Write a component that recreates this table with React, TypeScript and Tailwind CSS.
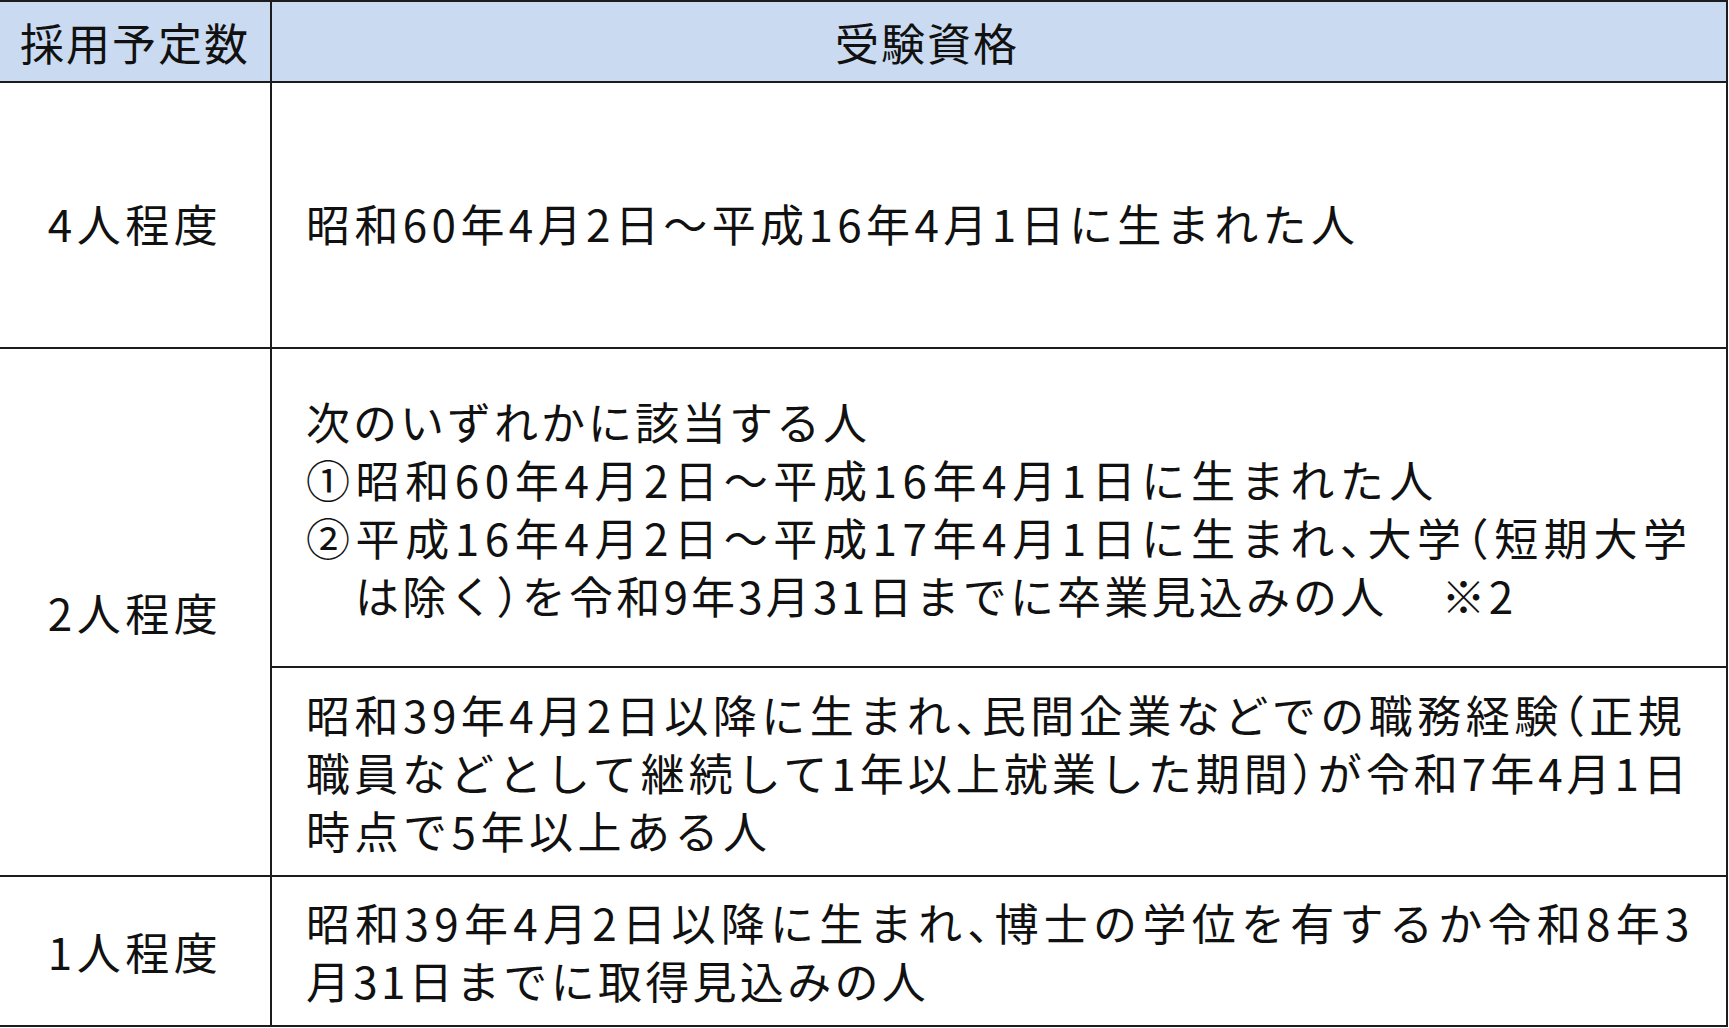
import React from "react";

const font = { fontFamily: '"Noto Sans CJK JP", "Noto Sans", sans-serif' };

function Line({
  children,
  indent = false,
  className = "",
}: {
  children: React.ReactNode;
  indent?: boolean;
  className?: string;
}) {
  return (
    <div className={`whitespace-nowrap leading-[58px] ${indent ? "pl-[49px]" : ""} ${className}`}>{children}</div>
  );
}

function P({ children }: { children: React.ReactNode }) {
  return <span className="[font-feature-settings:'halt']">{children}</span>;
}

const body = "text-[44px] tracking-[4.5px]";
const line = "border-[#1c1c1c]";

export default function App() {
  return (
    <div className="w-[1729px] h-[1028px] bg-white text-[#111111]" style={font}>
      <div className={`w-[1728px] border-t-2 border-r-2 border-b-2 ${line}`}>
        {/* header */}
        <div className={`flex h-[81px] border-b-2 ${line} bg-[#cadaf0]`}>
          <div className={`w-[272px] shrink-0 border-r-2 ${line} flex items-center justify-center text-[44px] tracking-[2px]`}>
            採用予定数
          </div>
          <div className="flex-1 flex items-center justify-center pr-[144px] text-[44px] tracking-[2px]">
            受験資格
          </div>
        </div>

        {/* row 1 */}
        <div className={`flex h-[266px] border-b-2 ${line}`}>
          <div className={`w-[272px] shrink-0 border-r-2 ${line} flex items-center justify-center pt-[15px] ${body}`}>
            4人程度
          </div>
          <div className={`flex-1 flex flex-col justify-center pt-[15px] pl-[34px] ${body}`}>
            <Line className="tracking-[4.4px]">昭和60年4月2日～平成16年4月1日に生まれた人</Line>
          </div>
        </div>

        {/* row 2 */}
        <div className={`flex h-[528px] border-b-2 ${line}`}>
          <div className={`w-[272px] shrink-0 border-r-2 ${line} flex items-center justify-center ${body}`}>
            2人程度
          </div>
          <div className="flex-1 flex flex-col">
            <div className={`h-[319px] border-b-2 ${line} flex flex-col justify-center pl-[34px] ${body}`}>
              <Line className="tracking-[3px]">次のいずれかに該当する人</Line>
              <Line className="tracking-[5.6px]">①昭和60年4月2日～平成16年4月1日に生まれた人</Line>
              <Line className="tracking-[5.6px]">
                ②平成16年4月2日～平成17年4月1日に生まれ<P>、</P>大学<P>（</P>短期大学
              </Line>
              <Line indent className="tracking-[3.2px]">
                は除く<P>）</P>を令和9年3月31日までに卒業見込みの人<span className="ml-[54px]">※2</span>
              </Line>
            </div>
            <div className={`flex-1 flex flex-col justify-center pl-[34px] ${body}`}>
              <Line>
                昭和39年4月2日以降に生まれ<P>、</P>民間企業などでの職務経験<P>（</P>正規
              </Line>
              <Line className="tracking-[4px]">
                職員などとして継続して1年以上就業した期間<P>）</P>が令和7年4月1日
              </Line>
              <Line>時点で5年以上ある人</Line>
            </div>
          </div>
        </div>

        {/* row 3 */}
        <div className="flex h-[148px]">
          <div className={`w-[272px] shrink-0 border-r-2 ${line} flex items-center justify-center ${body}`}>
            1人程度
          </div>
          <div className={`flex-1 flex flex-col justify-center pl-[34px] ${body}`}>
            <Line className="tracking-[5.3px]">
              昭和39年4月2日以降に生まれ<P>、</P>博士の学位を有するか令和8年3
            </Line>
            <Line className="tracking-[3.3px]">月31日までに取得見込みの人</Line>
          </div>
        </div>
      </div>
    </div>
  );
}
